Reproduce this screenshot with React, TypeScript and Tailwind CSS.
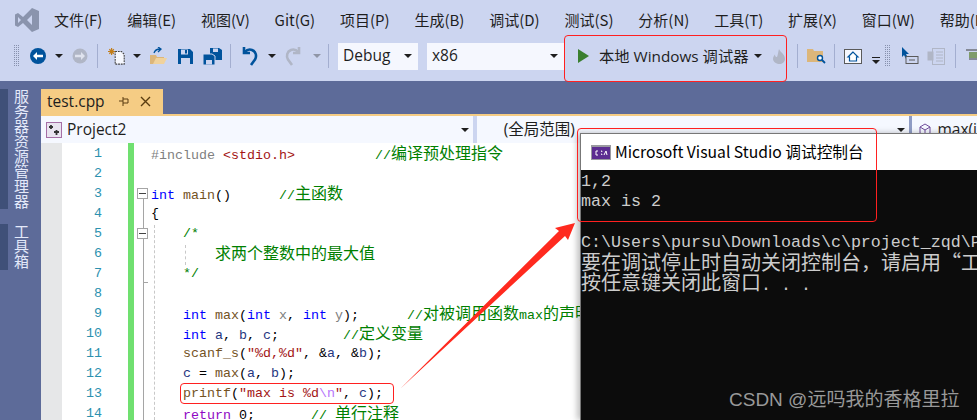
const zh = '"Noto Sans CJK SC", sans-serif'
const ui = '"Open Sans", "Noto Sans CJK SC", sans-serif'

const menus = ["文件(F)", "编辑(E)", "视图(V)", "Git(G)", "项目(P)", "生成(B)", "调试(D)", "测试(S)", "分析(N)", "工具(T)", "扩展(X)", "窗口(W)", "帮助(H)"]

function Caret({ grey, className = "" }: { grey?: boolean; className?: string }) {
  return <span className={`block w-0 h-0 border-x-[4px] border-x-transparent border-t-[4px] ${grey ? "border-t-[#8f95a6]" : "border-t-[#1e1e1e]"} ${className}`} />
}

function Sep({ className = "" }: { className?: string }) {
  return <span className={`block w-px h-[24px] bg-[#a3aed0] ${className}`} />
}

function Grip({ className = "" }: { className?: string }) {
  return (
    <svg width="6" height="22" className={className}>
      <defs>
        <pattern id="grip" width="2" height="2" patternUnits="userSpaceOnUse">
          <rect width="1" height="1" fill="#8791ad" />
        </pattern>
      </defs>
      <rect width="6" height="22" fill="url(#grip)" />
    </svg>
  )
}

function Combo({ label, className = "" }: { label: string; className?: string }) {
  return (
    <div className={`h-[27px] bg-[#f5f7fe] flex items-center justify-between pl-[5px] pr-[6px] text-[#1e1e1e] text-[15.500px] ${className}`} style={{ fontFamily: ui }}>
      <span>{label}</span>
      <Caret />
    </div>
  )
}

function Toolbar() {
  return (
    <div className="h-[41px] flex items-center pb-[9px] overflow-hidden [&>*]:shrink-0">
      <Grip className="ml-[14px]" />
      <svg width="16" height="16" viewBox="0 0 16 16" className="ml-[10px]">
        <circle cx="8" cy="8" r="8" fill="#00539c" />
        <path d="M3 8l4-4v2.800h6v2.400H7V12z" fill="#fff" />
      </svg>
      <Caret className="ml-[9px]" />
      <svg width="16" height="16" viewBox="0 0 16 16" className="ml-[9px]">
        <circle cx="8" cy="8" r="7.500" fill="#b0b6c6" />
        <path d="M13 8L9 4v2.800H3v2.400h6V12z" fill="#dfe3ee" />
      </svg>
      <Sep className="ml-[9px]" />
      <svg width="18" height="18" viewBox="0 0 20 20" className="ml-[10px]">
        <path d="M8 5h7l3 3v11H8z" fill="#f5f7fe" stroke="#424242" strokeWidth="1.200" strokeDasharray="2 1" />
        <path d="M4 1v8M0 5h8M1.500 2.500l5 5M6.500 2.500l-5 5" stroke="#c27d1a" strokeWidth="1.300" />
      </svg>
      <Caret className="ml-[7px]" />
      <svg width="18" height="18" viewBox="0 0 18 18" className="ml-[8px]">
        <path d="M1 8h6l1 2h7v7H1z" fill="#dcb67a" />
        <path d="M4 17l3-6h11l-3 6z" fill="#f0d29c" />
        <path d="M5 6c1-3 3-4 6-4M9 0l3 2-3 3" stroke="#00539c" strokeWidth="1.300" fill="none" />
      </svg>
      <svg width="17" height="17" viewBox="0 0 17 17" className="ml-[10px]">
        <path d="M1 1h12l3 3v12H1z" fill="#00539c" />
        <rect x="4" y="1.500" width="7" height="5" fill="#ccd5f0" />
        <rect x="8" y="2" width="2" height="3.500" fill="#00539c" />
        <rect x="4" y="10" width="9" height="6" fill="#ccd5f0" />
      </svg>
      <svg width="19" height="17" viewBox="0 0 19 17" className="ml-[9px]">
        <path d="M7 0h9l3 2v10H7z" fill="#00539c" />
        <rect x="10" y="0.500" width="5" height="3.500" fill="#ccd5f0" />
        <path d="M0 6h9l3 2v9H0z" fill="#00539c" stroke="#ccd5f0" />
        <rect x="3" y="12" width="6" height="4.500" fill="#ccd5f0" />
      </svg>
      <Sep className="ml-[8px]" />
      <svg width="17" height="20" viewBox="0 0 17 20" className="ml-[10px]">
        <path d="M3 1v6h6M3.500 6.500C6 3.500 8.500 3 11 4c4 1.500 5 6 3 9.500L10 19" fill="none" stroke="#00539c" strokeWidth="2.600" />
      </svg>
      <Caret className="ml-[10px]" />
      <svg width="17" height="20" viewBox="0 0 17 20" className="ml-[9px]">
        <path d="M14 1v6H8M13.500 6.500C11 3.500 8.500 3 6 4 2 5.500 1 10 3 13.500L7 19" fill="none" stroke="#b0b6c6" strokeWidth="2.600" />
      </svg>
      <Caret grey className="ml-[11px]" />
      <Sep className="ml-[7px]" />
      <Combo label="Debug" className="ml-[9px] w-[80px]" />
      <Combo label="x86" className="ml-[9px] w-[137px]" />
      <svg width="11" height="14" viewBox="0 0 11 14" className="ml-[14px]">
        <path d="M0 0l11 7-11 7z" fill="#3a7f2f" />
      </svg>
      <span className="ml-[10px] w-[150px] text-[15.300px] text-[#1e1e1e] whitespace-pre" style={{ fontFamily: ui }}>本地 Windows 调试器</span>
      <Caret className="ml-[5px]" />
      <svg width="13" height="15" viewBox="0 0 13 15" className="ml-[11px]">
        <path d="M6 0c1 3 6 5 6 10 0 3-3 5-5.500 5S0 13 0 10c0-2 1-3.500 2-4.500 0 2 1 2.500 2 2.500C5 6 5 3 6 0z" fill="#b0b6c6" />
      </svg>
      <Sep className="ml-[11px]" />
      <svg width="19" height="16" viewBox="0 0 19 16" className="ml-[9px]">
        <path d="M0 1h6l1 2h9v11H0z" fill="#dcb67a" />
        <circle cx="13" cy="10" r="2.500" fill="#fff" stroke="#00539c" strokeWidth="1.400" />
        <path d="M15 12l3 3" stroke="#00539c" strokeWidth="1.800" />
      </svg>
      <Sep className="ml-[8px]" />
      <svg width="18" height="15" viewBox="0 0 18 15" className="ml-[9px]">
        <rect x="0.500" y="0.500" width="17" height="14" fill="#f5f7fe" stroke="#5a5a5a" />
        <path d="M9 3L4 8h1.500v4h7V8H14z" fill="#fff" stroke="#00539c" strokeWidth="1.200" />
      </svg>
      <span className="ml-[10px] flex flex-col gap-[2px] mt-[8px]">
        <span className="block w-[8px] h-px bg-[#1e1e1e]" />
        <Caret />
      </span>
      <Grip className="ml-[5px]" />
      <svg width="18" height="18" viewBox="0 0 18 18" className="ml-[10px]">
        <path d="M1 0l7 7H5l2 4-2 1-2-4-2 2z" fill="#00539c" />
        <rect x="5" y="9.500" width="12" height="7" fill="#ccd5f0" stroke="#5a5a5a" />
        <path d="M8 13h6" stroke="#5a5a5a" />
      </svg>
      <svg width="18" height="17" viewBox="0 0 18 17" className="ml-[8px]">
        <rect x="5.500" y="0.500" width="12" height="16" fill="none" stroke="#b0b6c6" />
        <rect x="0.500" y="3.500" width="6" height="9" fill="#b0b6c6" />
        <path d="M9 4h7M9 7h7M9 10h7M9 13h7" stroke="#b0b6c6" />
      </svg>
      <Sep className="ml-[10px]" />
      <svg width="14" height="14" viewBox="0 0 14 14" className="ml-[10px]">
        <path d="M0 1h14M3 4h11M3 7h11M3 10h11" stroke="#3f3f3f" />
        <rect x="3" y="3" width="8" height="6" fill="#7f9c6a" />
      </svg>
    </div>
  )
}

function Sidebar() {
  const tab = (label: string, h: string) => (
    <div className={`flex ${h}`}>
      <div className="w-[8px] bg-[#3f5078]" />
      <div className="ml-[6px] [writing-mode:vertical-rl] text-[15px] leading-[15px] text-[#e4e9fa] whitespace-nowrap" style={{ fontFamily: zh }}>{label}</div>
    </div>
  )
  return (
    <div className="w-[41px] flex flex-col pt-[8px] gap-[15px] shrink-0">
      {tab("服务器资源管理器", "h-[120px]")}
      {tab("工具箱", "h-[46px]")}
    </div>
  )
}

function C({ children }: { children: React.ReactNode }) {
  return <span className="text-[16px] leading-none" style={{ fontFamily: zh }}>{children}</span>
}

const Kw = ({ t }: { t: string }) => <span className="text-[#0000ff]">{t}</span>
const Fn = ({ t }: { t: string }) => <span className="text-[#74531f]">{t}</span>
const Loc = ({ t }: { t: string }) => <span className="text-[#1f377f]">{t}</span>
const Par = ({ t }: { t: string }) => <span className="text-[#808080]">{t}</span>
const Str = ({ t }: { t: string }) => <span className="text-[#a31515]">{t}</span>
const Com = ({ children }: { children: React.ReactNode }) => <span className="text-[#008000]">{children}</span>

const lines: React.ReactNode[] = [
  <><span className="text-[#808080]">#include </span><Str t="<stdio.h>" />{"          "}<Com>//<C>编译预处理指令</C></Com></>,
  "",
  <><Kw t="int" /> <Fn t="main" />(){"      "}<Com>//<C>主函数</C></Com></>,
  "{",
  <>{"    "}<Com>/*</Com></>,
  <>{"        "}<Com><C>求两个整数中的最大值</C></Com></>,
  <>{"    "}<Com>*/</Com></>,
  "",
  <>{"    "}<Kw t="int" /> <Fn t="max" />(<Kw t="int" /> <Par t="x" />, <Kw t="int" /> <Par t="y" />);{"      "}<Com>//<C>对被调用函数</C>max<C>的声明</C></Com></>,
  <>{"    "}<Kw t="int" /> <Loc t="a" />, <Loc t="b" />, <Loc t="c" />;{"        "}<Com>//<C>定义变量</C></Com></>,
  <>{"    "}<Fn t="scanf_s" />(<Str t={'"%d,%d"'} />, &amp;<Loc t="a" />, &amp;<Loc t="b" />);</>,
  <>{"    "}<Loc t="c" /> = <Fn t="max" />(<Loc t="a" />, <Loc t="b" />);</>,
  <>{"    "}<Fn t="printf" />(<Str t={'"max is %d'} /><span className="text-[#b776fb]">\n</span><Str t={'"'} />, <Loc t="c" />);</>,
  <>{"    "}<span className="text-[#8f08c4]">return</span> 0;{"       "}<Com>// <C>单行注释</C></Com></>,
]

function Editor() {
  return (
    <div className="flex-1 flex bg-white min-h-0" style={{ fontFamily: '"Liberation Mono", monospace' }}>
      <div className="w-[21px] bg-[#e6e7e8] shrink-0" />
      <div className="w-[40px] shrink-0 pt-[1px] text-right text-[#2b91af] text-[13.330px]">
        {lines.map((_, i) => <div key={i} className="h-[20px] leading-[20px]">{i + 1}</div>)}
      </div>
      <div className="w-[26px] shrink-0" />
      <div className="w-[6px] bg-[#70e070] shrink-0" />
      <div className="w-[17px] shrink-0 relative">
        <span className="absolute left-[9px] top-[56px] bottom-0 w-px bg-[#a5a5a5]" />
        <span className="absolute left-[3px] top-[45px] w-[11px] h-[11px] border border-[#a5a5a5] bg-white flex items-center justify-center"><span className="block w-[7px] h-px bg-[#444]" /></span>
        <span className="absolute left-[3px] top-[85px] w-[11px] h-[11px] border border-[#a5a5a5] bg-white flex items-center justify-center"><span className="block w-[7px] h-px bg-[#444]" /></span>
        <span className="absolute left-[9px] top-[139px] w-[5px] h-px bg-[#a5a5a5]" />
      </div>
      <div className="flex-1 relative pt-[1px] text-[13.330px] text-[#000] whitespace-pre overflow-hidden">
        <span className="absolute left-[3px] top-[82px] bottom-0 border-l border-dashed border-[#c8c8c8]" />
        <span className="absolute left-[34px] top-[102px] h-[20px] border-l border-dashed border-[#c8c8c8]" />
        {lines.map((l, i) => <div key={i} className="relative h-[20px] leading-[20px]">{l}</div>)}
      </div>
    </div>
  )
}

function Console() {
  const line = "h-[20.300px] leading-[20px] whitespace-pre"
  const mono = '"Liberation Mono", monospace'
  return (
    <div className="absolute left-[580px] top-[133px] w-[397px] h-[287px] flex flex-col shadow-[-3px_0_6px_rgba(0,0,0,0.25)]">
      <div className="h-[37px] bg-white flex items-center pl-[10px] border-t border-l border-[#777]">
        <svg width="20" height="15" viewBox="0 0 20 15" className="shrink-0">
          <rect width="20" height="15" fill="#9a9aa0" />
          <rect x="1" y="2" width="18" height="12" fill="#5c2d91" />
          <path d="M7 6H5v4h2M10 6h.8v1M10 9h.8v1M13 10l2-4 1 4" stroke="#fff" fill="none" />
        </svg>
        <span className="ml-[4px] text-[15.700px] text-black whitespace-pre" style={{ fontFamily: zh }}>Microsoft Visual Studio 调试控制台</span>
      </div>
      <div className="flex-1 bg-[#0c0c0c] text-[#cccccc] text-[16.670px] overflow-hidden pt-[2px] border-l border-[#777]" style={{ fontFamily: mono }}>
        <div className={line}>1,2</div>
        <div className={line}>max is 2</div>
        <div className={line}> </div>
        <div className={line}>C:\Users\pursu\Downloads\c\project_zqd\Project2</div>
        <div className={`${line} text-[20px] -mt-[1px]`} style={{ fontFamily: zh }}>要在调试停止时自动关闭控制台{"\uFF0C"}请启用{"\u201C"}工具</div>
        <div className={`${line} text-[20px]`} style={{ fontFamily: zh }}>按任意键关闭此窗口<span className="text-[16.670px]" style={{ fontFamily: mono }}>. . .</span></div>
      </div>
    </div>
  )
}

export default function App() {
  return (
    <div className="w-[977px] h-[420px] relative overflow-hidden bg-[#5d6b99]">
      <div className="bg-[#ccd5f0]">
        <div className="h-[40px] flex items-center overflow-hidden">
          <svg width="24" height="24" viewBox="0 0 24 24" className="ml-[15px] shrink-0">
            <path d="M17 0l7 3v18l-7 3-9-9-5 4-3-1.500V6.500L3 5l5 4zM17 7l-5 5 5 5zM3 9v6l3-3z" fill="#8a94ad" fillRule="evenodd" />
          </svg>
          <div className="ml-[15px] flex shrink-0 gap-[24.800px] text-[15px] text-[#1e1e1e] whitespace-nowrap" style={{ fontFamily: zh }}>
            {menus.map(m => <span key={m}>{m}</span>)}
          </div>
        </div>
        <Toolbar />
      </div>
      <div className="flex h-[339px]">
        <Sidebar />
        <div className="flex-1 flex flex-col pt-[8px] min-w-0">
          <div className="h-[25px] w-[122px] bg-[#f5cc84] flex items-center pl-[6px] text-[15.500px] text-[#1e1e1e]" style={{ fontFamily: ui }}>
            test.cpp
            <svg width="12" height="12" viewBox="0 0 12 12" className="ml-[13px]"><path d="M5 1v9M5 3h5v4H5M1 5h4" stroke="#5a3d10" fill="none" /></svg>
            <svg width="11" height="11" viewBox="0 0 11 11" className="ml-[10px]"><path d="M1 1l9 9M10 1l-9 9" stroke="#5a3d10" strokeWidth="1.400" /></svg>
          </div>
          <div className="h-[2px] bg-[#f5cc84]" />
          <div className="h-[27px] flex bg-[#ccd5f0] text-[15.500px] text-[#1e1e1e]" style={{ fontFamily: ui }}>
            <div className="w-[432px] bg-[#f5f8ff] flex items-center justify-between pl-[5px] pr-[4px]">
              <span className="flex items-center gap-[5px]">
                <svg width="16" height="16" viewBox="0 0 16 16">
                  <rect x="0.500" y="0.500" width="15" height="15" fill="#e9e4f0" stroke="#a66fa6" />
                  <path d="M3 5h4M5 3v4M8 10h5M10.500 8v5" stroke="#333" strokeWidth="1.800" />
                </svg>
                Project2
              </span>
              <Caret />
            </div>
            <div className="w-[4px]" />
            <div className="w-[433px] bg-[#f5f8ff] flex items-center justify-between pl-[27px] pr-[4px]">
              <span>(全局范围)</span>
              <Caret />
            </div>
            <div className="w-[3px] bg-[#8f9cc4]" />
            <div className="flex-1 bg-[#f5f8ff] flex items-center pl-[6px] gap-[5px] whitespace-nowrap">
              <svg width="14" height="14" viewBox="0 0 14 14"><path d="M7 1l5 3v6l-5 3-5-3V4zM2 4l5 3 5-3M7 7v6" fill="none" stroke="#6f4c9c" /></svg>
              max(i
            </div>
          </div>
          <Editor />
        </div>
      </div>

      <Console />

      {/* red annotations on top of the screenshot */}
      <div className="absolute left-[564px] top-[35px] w-[223px] h-[47px] border border-[#ff2020] rounded-[4px]" />
      <div className="absolute left-[577px] top-[128px] w-[300px] h-[94px] border border-[#ff2020] rounded-[4px]" />
      <div className="absolute left-[180px] top-[383px] w-[214px] h-[21px] border border-[#ff2020] rounded-[4px]" />
      <svg width="977" height="420" className="absolute left-0 top-0 pointer-events-none">
        <path d="M400 389L559 231 555 228 575 223 568 240 565 236Z" fill="#ff2a1f" />
      </svg>
      <div className="absolute left-[729px] top-[386px] text-[19px] leading-[28px] text-[#999999] whitespace-nowrap" style={{ fontFamily: '"Liberation Sans", "Noto Sans CJK SC", sans-serif' }}>CSDN @远吗我的香格里拉</div>
    </div>
  )
}
